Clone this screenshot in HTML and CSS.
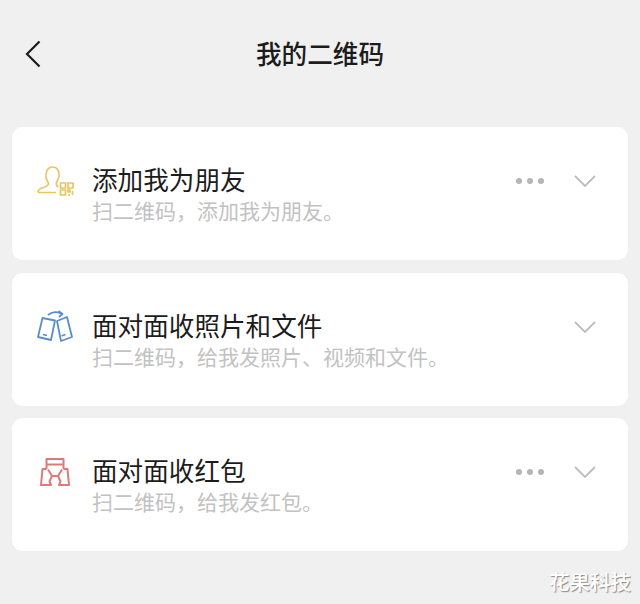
FILE: index.html
```html
<!DOCTYPE html>
<html lang="zh">
<head>
<meta charset="utf-8">
<title>我的二维码</title>
<link rel="stylesheet" href="styles.css">
</head>
<body>
<div class="page">
  <header class="nav">
    <svg class="back" width="18" height="28" viewBox="0 0 18 28"><path d="M15.500 1.500 3 14l12.500 12.500" fill="none" stroke="#1c1c1c" stroke-width="2.200"/></svg>
    <h1 class="title">我的二维码</h1>
  </header>
  <main class="list">
    <section class="card">
      <svg class="icon" width="38" height="32" viewBox="0 0 38 32" fill="none" stroke="#e6c661" stroke-width="1.700">
        <path d="M1 27.500c0-3 2-4 5-5 3-1 5.500-1.500 5.500-4 0-1.500-2-3-2.500-6C8.500 7 10.500 2 15.500 2S22.500 6.500 22 11c-.3 3-2 5-2.500 6.500-.4 1.500-.2 3 1.500 4.500M1 27.500h18"/>
        <path d="M23.500 18h5v5h-5zM31 18h5v5h-5zM23.500 25h5v5h-5z"/>
        <path d="M31 25h2v2h-2zM35.500 26v4M31 30h2"/>
      </svg>
      <div class="text">
        <div class="name">添加我为朋友</div>
        <div class="desc">扫二维码，添加我为朋友。</div>
      </div>
      <div class="dots"><i></i><i></i><i></i></div>
      <svg class="chev" width="22" height="12" viewBox="0 0 22 12"><path d="M1 1l10 10L21 1" fill="none" stroke="#bdbdbd" stroke-width="1.800"/></svg>
    </section>
    <section class="card">
      <svg class="icon" width="38" height="36" viewBox="0 0 38 36" fill="none" stroke="#5b8ec9" stroke-width="1.800" stroke-linejoin="round">
        <path d="M5.500 9 18 11.500 14 31 1 28z"/>
        <path d="M20 12 30 8l5 20-11 4z"/>
        <path d="M6 25.500l4 1M24.500 27l4-1.500"/>
        <path d="M11 6C15 2.500 21 2 25 5"/>
        <path d="M21.500 2 25.500 5 22 8"/>
      </svg>
      <div class="text">
        <div class="name">面对面收照片和文件</div>
        <div class="desc">扫二维码，给我发照片、视频和文件。</div>
      </div>
      <svg class="chev" width="22" height="12" viewBox="0 0 22 12"><path d="M1 1l10 10L21 1" fill="none" stroke="#bdbdbd" stroke-width="1.800"/></svg>
    </section>
    <section class="card">
      <svg class="icon" width="38" height="32" viewBox="0 0 38 32" fill="none" stroke="#dd7a78" stroke-width="2" stroke-linejoin="round">
        <path d="M9.500 13V3h17v10"/>
        <path d="M9.500 8.500h17"/>
        <path d="M9.500 13H5.500L4 29h10l-1.500-3.500L15 20h6l2.500 5.500L22 29h10L30.500 13h-4"/>
        <path d="M11 13.500 15 20M25 13.500 21 20"/>
      </svg>
      <div class="text">
        <div class="name">面对面收红包</div>
        <div class="desc">扫二维码，给我发红包。</div>
      </div>
      <div class="dots"><i></i><i></i><i></i></div>
      <svg class="chev" width="22" height="12" viewBox="0 0 22 12"><path d="M1 1l10 10L21 1" fill="none" stroke="#bdbdbd" stroke-width="1.800"/></svg>
    </section>
  </main>
  <div class="mark">花果科技</div>
</div>
</body>
</html>
```
FILE: styles.css
```css
* { box-sizing: border-box; margin: 0; padding: 0; }
html, body { width: 640px; height: 604px; overflow: hidden; }
body { background: #f0f0f0; font-family: "Noto Sans CJK SC", "Noto Sans", sans-serif; }
.page { position: relative; width: 640px; height: 604px; padding: 0 12px; }
.nav { position: relative; height: 127px; display: flex; justify-content: center; padding-top: 35px; }
.back { position: absolute; left: 12px; top: 40px; }
.title { font-size: 25.600px; line-height: 36px; font-weight: 500; color: #1c1c1c; height: 36px; }
.list { display: flex; flex-direction: column; gap: 12.500px; }
.card { height: 133px; background: #fff; border-radius: 11px; display: flex; align-items: center; padding: 0 32px 0 25px; }
.icon { flex: none; margin-top: -25px; margin-right: 17px; }
.text { flex: 1; margin-top: -1px; }
.name { font-size: 25.600px; line-height: 34px; color: #1c1c1c; }
.desc { font-size: 21px; line-height: 28px; color: #c2c2c2; margin-top: 0; }
.dots { display: flex; gap: 5px; margin-right: 30px; margin-top: -25px; }
.dots i { display: block; width: 6px; height: 6px; border-radius: 50%; background: #b5b5b5; }
.chev { flex: none; margin-top: -25px; }
.mark { position: absolute; right: 9px; top: 567px; font-size: 20.500px; line-height: 28px; color: #fff; font-weight: 500; text-shadow: 1px 1px 1px #888; }
```
